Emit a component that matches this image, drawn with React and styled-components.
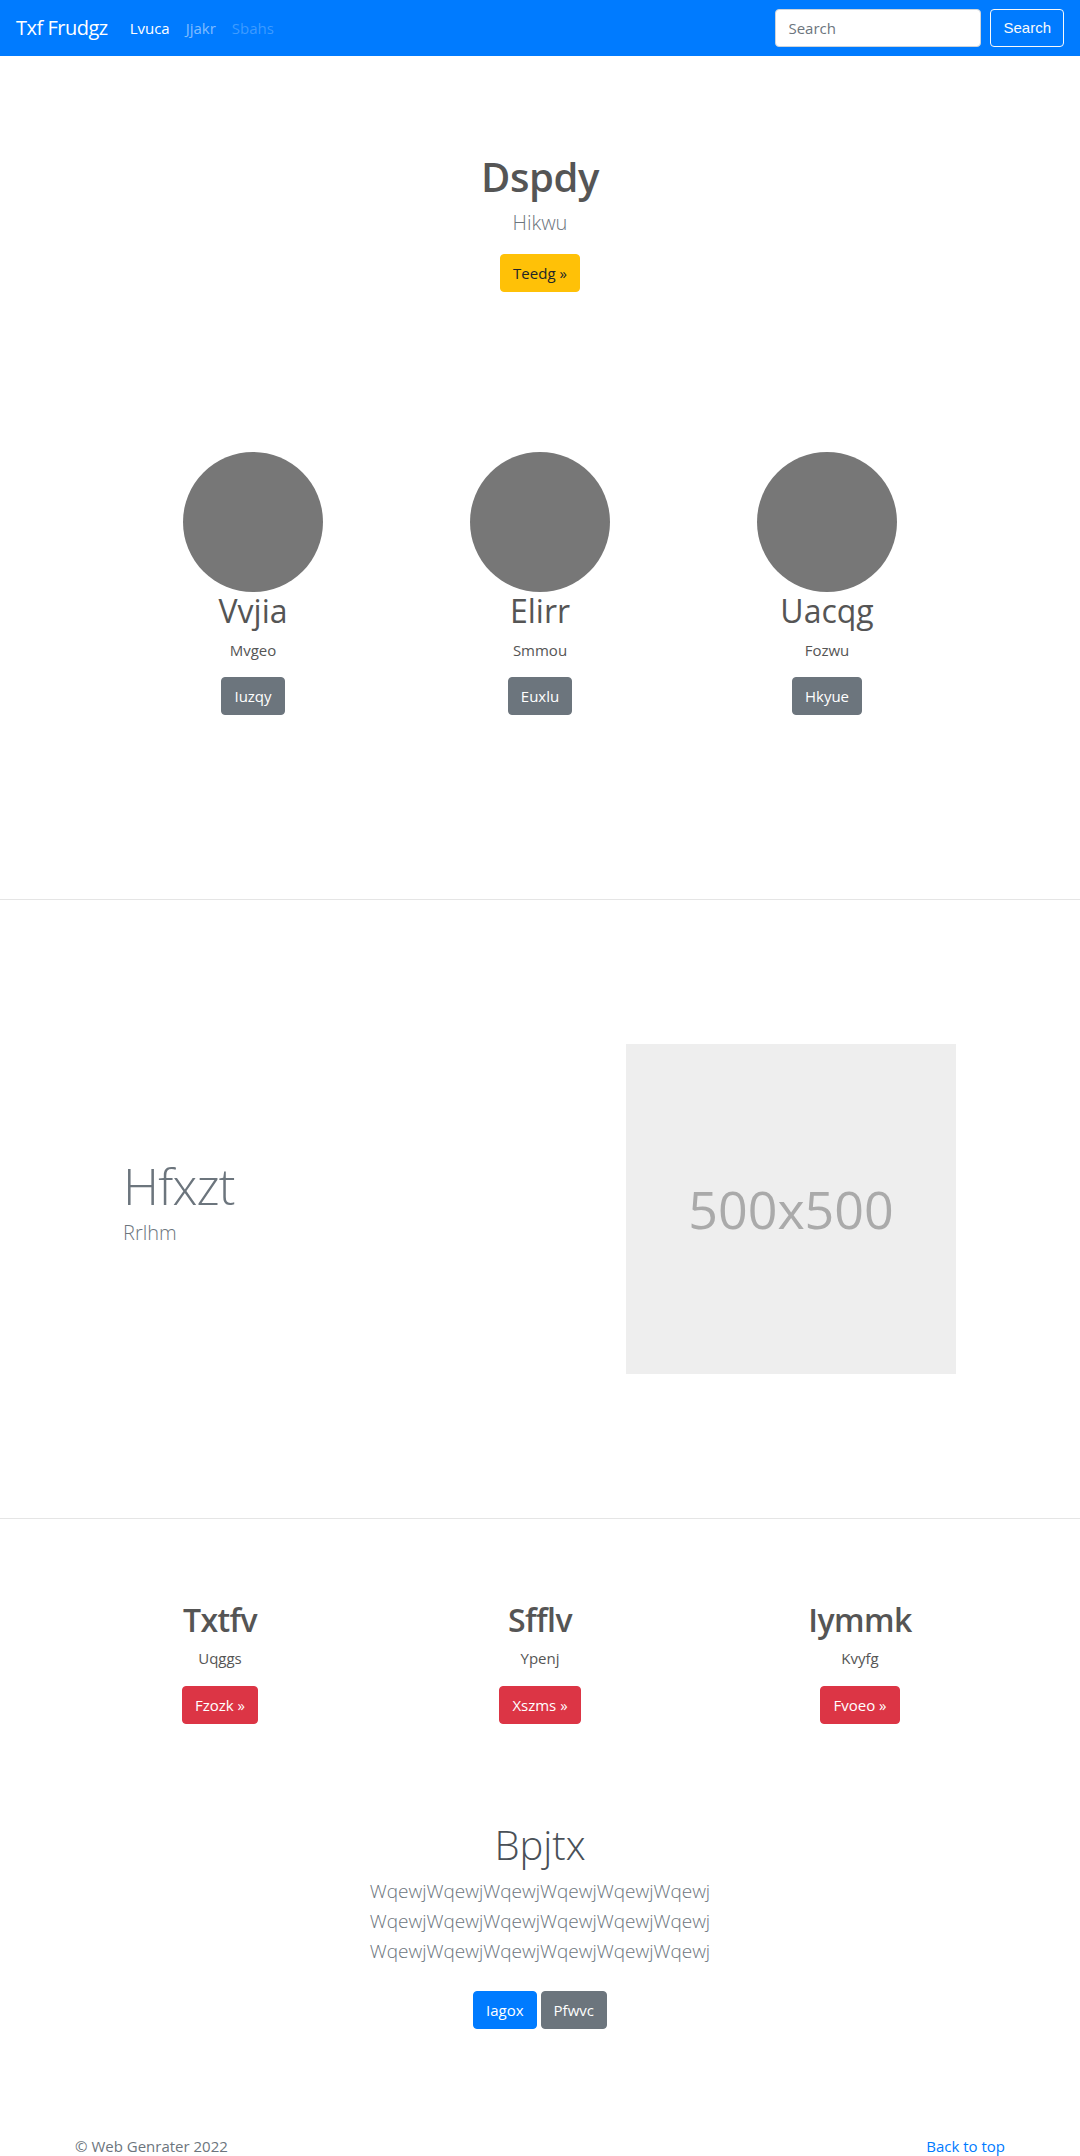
import React from "react";
import styled, { createGlobalStyle } from "styled-components";

const Global = createGlobalStyle`
  * { box-sizing: border-box; }
  html, body { margin: 0; padding: 0; background: #fff; }
  body {
    font-family: "Open Sans", "Noto Sans", "Liberation Sans", sans-serif;
    font-size: 16px;
    line-height: 1.5;
    color: #212529;
  }
`;

const Navbar = styled.nav`
  height: 56px;
  background: #007bff;
  display: flex;
  align-items: center;
  padding: 0 16px;
`;

const Brand = styled.a`
  font-size: 20px;
  line-height: 30px;
  color: #fff;
  margin-right: 14px;
  text-decoration: none;
  letter-spacing: -0.5px;
`;

const NavList = styled.div`
  display: flex;
  flex: 1;
`;

const NavLink = styled.a`
  padding: 8px;
  font-size: 15px;
  color: ${(p) =>
    p.$state === "active"
      ? "#fff"
      : p.$state === "disabled"
      ? "rgba(255,255,255,0.25)"
      : "rgba(255,255,255,0.5)"};
  text-decoration: none;
`;

const SearchForm = styled.form`
  display: flex;
  align-items: center;
  gap: 9px;
`;

const SearchInput = styled.input`
  width: 206px;
  height: 38px;
  padding: 6px 12px;
  font: inherit;
  font-size: 15px;
  color: #495057;
  border: 1px solid #ced4da;
  border-radius: 4px;
  background: #fff;
  &::placeholder { color: #6c757d; }
`;

const Button = styled.a`
  display: inline-block;
  height: 38px;
  padding: 6px 12px;
  font-size: 15px;
  line-height: 24px;
  border-radius: 4px;
  border: 1px solid ${(p) => p.$border || p.$bg};
  background: ${(p) => p.$bg};
  color: ${(p) => p.$color || "#fff"};
  text-decoration: none;
  white-space: nowrap;
`;

const Hero = styled.section`
  padding-top: 97px;
  text-align: center;
`;

const HeroTitle = styled.h1`
  margin: 0 0 7px;
  font-size: 40px;
  font-weight: 600;
  line-height: 48px;
  letter-spacing: -0.4px;
  color: #555;
`;

const Lead = styled.p`
  margin: 0 0 ${(p) => p.$mb ?? 16}px;
  font-size: ${(p) => p.$size || 20}px;
  line-height: ${(p) => p.$lh || 30}px;
  font-weight: 300;
  color: #6c757d;
`;

const Team = styled.section`
  display: grid;
  grid-template-columns: repeat(3, 287px);
  justify-content: center;
  padding-top: 160px;
  padding-bottom: 184px;
  border-bottom: 1px solid #e5e5e5;
`;

const Member = styled.div`
  display: flex;
  flex-direction: column;
  align-items: center;
  text-align: center;
`;

const Avatar = styled.div`
  width: 140px;
  height: 140px;
  border-radius: 50%;
  background: #777;
`;

const MemberName = styled.h2`
  margin: 0 0 8px;
  font-size: 32px;
  line-height: 38px;
  font-weight: 400;
  color: #555;
`;

const SmallText = styled.p`
  margin: 0 0 ${(p) => p.$mb || 15}px;
  font-size: 15px;
  line-height: 24px;
  color: #555;
`;

const Featurette = styled.section`
  border-bottom: 1px solid #e5e5e5;
  padding: 144px 0;
`;

const FeatureRow = styled.div`
  width: 960px;
  margin: 0 auto;
  padding: 0 64px 0 63px;
  display: flex;
  align-items: center;
  justify-content: space-between;
`;

const FeatureText = styled.div`
  padding-bottom: 11px;
`;

const FeatureHeading = styled.h2`
  margin: 0 0 4px;
  font-size: 50px;
  line-height: 1.1;
  font-weight: 300;
  letter-spacing: -0.8px;
  color: #6c757d;
`;

const Placeholder = styled.div`
  width: 330px;
  height: 330px;
  background: #eee;
  color: #aaa;
  font-size: 52px;
  display: flex;
  align-items: center;
  justify-content: center;
`;

const Features = styled.section`
  width: 960px;
  margin: 0 auto;
  padding-top: 82px;
  display: grid;
  grid-template-columns: repeat(3, 1fr);
`;

const FeatureCol = styled.div`
  text-align: center;
`;

const ColTitle = styled.h2`
  margin: 0 0 7px;
  font-size: 32px;
  line-height: 38px;
  font-weight: 600;
  letter-spacing: -0.6px;
  color: #555;
`;

const Album = styled.section`
  padding-top: 97px;
  text-align: center;
`;

const AlbumTitle = styled.h1`
  margin: 0 0 7px;
  font-size: 40px;
  line-height: 48px;
  font-weight: 300;
  color: #495057;
`;

const ButtonRow = styled.div`
  display: flex;
  justify-content: center;
  gap: 4px;
`;

const Footer = styled.footer`
  width: 960px;
  margin: 0 auto;
  padding: 105px 15px 0;
  display: flex;
  justify-content: space-between;
  font-size: 15px;
  line-height: 24px;
  color: #6c757d;
`;

const FooterLink = styled.a`
  color: #007bff;
  text-decoration: none;
`;

const team = [
  { name: "Vvjia", sub: "Mvgeo", btn: "Iuzqy" },
  { name: "Elirr", sub: "Smmou", btn: "Euxlu" },
  { name: "Uacqg", sub: "Fozwu", btn: "Hkyue" },
];

const cols = [
  { title: "Txtfv", sub: "Uqggs", btn: "Fzozk »" },
  { title: "Sfflv", sub: "Ypenj", btn: "Xszms »" },
  { title: "Iymmk", sub: "Kvyfg", btn: "Fvoeo »" },
];

const line = "Wqewj".repeat(6);

export default function App() {
  return (
    <>
      <Global />
      <Navbar>
        <Brand href="#">Txf Frudgz</Brand>
        <NavList>
          <NavLink $state="active" href="#">Lvuca</NavLink>
          <NavLink href="#">Jjakr</NavLink>
          <NavLink $state="disabled" href="#">Sbahs</NavLink>
        </NavList>
        <SearchForm onSubmit={(e) => e.preventDefault()}>
          <SearchInput placeholder="Search" />
          <Button as="button" $bg="transparent" $border="#f8f9fa" $color="#f8f9fa">
            Search
          </Button>
        </SearchForm>
      </Navbar>

      <Hero>
        <HeroTitle>Dspdy</HeroTitle>
        <Lead>Hikwu</Lead>
        <Button $bg="#ffc107" $color="#212529" href="#">Teedg »</Button>
      </Hero>

      <Team>
        {team.map((m) => (
          <Member key={m.name}>
            <Avatar />
            <MemberName>{m.name}</MemberName>
            <SmallText>{m.sub}</SmallText>
            <Button $bg="#6c757d" href="#">{m.btn}</Button>
          </Member>
        ))}
      </Team>

      <Featurette>
        <FeatureRow>
          <FeatureText>
            <FeatureHeading>Hfxzt</FeatureHeading>
            <Lead $mb={0}>Rrlhm</Lead>
          </FeatureText>
          <Placeholder>500x500</Placeholder>
        </FeatureRow>
      </Featurette>

      <Features>
        {cols.map((c) => (
          <FeatureCol key={c.title}>
            <ColTitle>{c.title}</ColTitle>
            <SmallText $mb={16}>{c.sub}</SmallText>
            <Button $bg="#dc3545" href="#">{c.btn}</Button>
          </FeatureCol>
        ))}
      </Features>

      <Album>
        <AlbumTitle>Bpjtx</AlbumTitle>
        <Lead $size={19} $lh={30} $mb={25}>
          {line}
          <br />
          {line}
          <br />
          {line}
        </Lead>
        <ButtonRow>
          <Button $bg="#007bff" href="#">Iagox</Button>
          <Button $bg="#6c757d" href="#">Pfwvc</Button>
        </ButtonRow>
      </Album>

      <Footer>
        <span>© Web Genrater 2022</span>
        <FooterLink href="#">Back to top</FooterLink>
      </Footer>
    </>
  );
}
